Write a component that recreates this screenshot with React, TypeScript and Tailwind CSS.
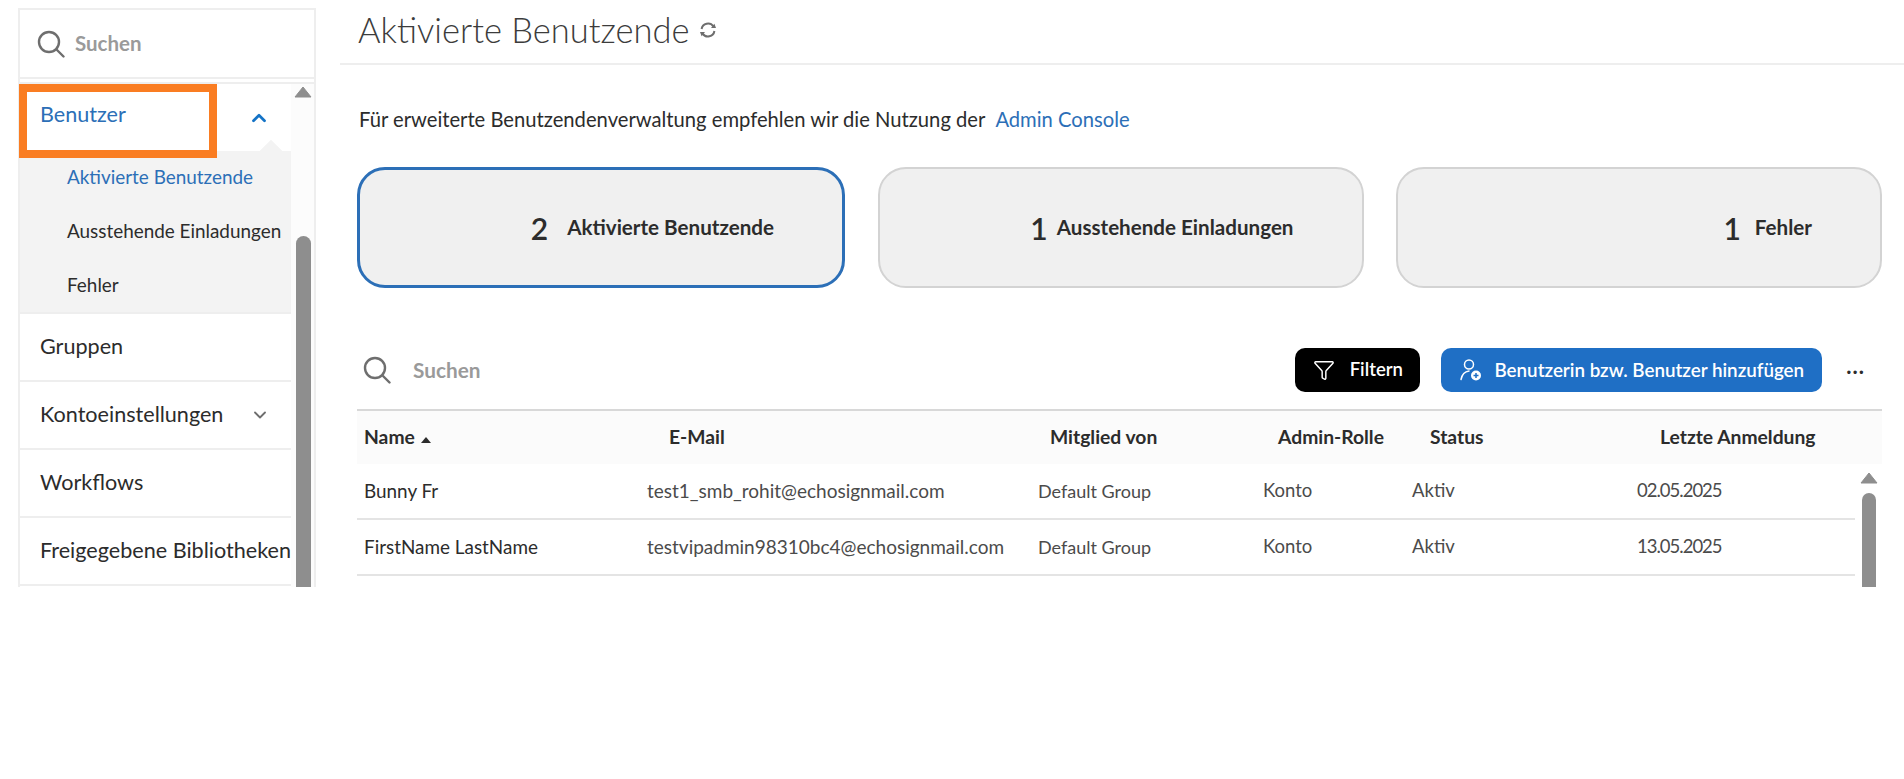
import { ChevronDown, ChevronUp, Funnel } from 'lucide-react';

const font = { fontFamily: 'Lato, "Noto Sans", sans-serif' };

function SearchIcon({ className }: { className?: string }) {
  return (
    <svg viewBox="0 0 28 28" fill="none" stroke="currentColor" strokeWidth="2.4" strokeLinecap="round" className={className}>
      <circle cx="12" cy="12" r="10" />
      <path d="M19.5 19.5 L26.5 26.5" />
    </svg>
  );
}

function RefreshIcon() {
  return (
    <svg viewBox="0 0 20 20" fill="none" stroke="#6e6e6e" strokeWidth="2" className="w-[20px] h-[20px]">
      <path d="M3.6 9 A6.5 6.5 0 0 1 15.4 6.4" />
      <path d="M16.4 11 A6.5 6.5 0 0 1 4.6 13.6" />
      <path d="M13 8 L18 8 L16.4 3.8 Z" fill="#6e6e6e" stroke="none" />
      <path d="M7 12 L2 12 L3.6 16.2 Z" fill="#6e6e6e" stroke="none" />
    </svg>
  );
}

function UserAddIcon() {
  return (
    <svg viewBox="0 0 24 24" fill="none" stroke="#fff" strokeWidth="1.5" className="w-[24px] h-[24px]">
      <circle cx="10" cy="6.5" r="4.5" />
      <path d="M2 21.5 C3 16.5 6 13.5 10 13" strokeLinecap="round" />
      <circle cx="17" cy="17.5" r="5" fill="#fff" stroke="none" />
      <path d="M17 15 V20 M14.5 17.5 H19.5" stroke="#1f6fc5" strokeWidth="1.5" />
    </svg>
  );
}

function ArrowUp({ className }: { className?: string }) {
  return (
    <svg viewBox="0 0 18 12" className={className}>
      <path d="M9 1 L17 11 H1 Z" fill="#8e8e8e" stroke="#8e8e8e" strokeLinejoin="round" />
    </svg>
  );
}

function NavRow({ label, chevron }: { label: string; chevron?: boolean }) {
  return (
    <div className="h-[68px] shrink-0 flex items-center justify-between pl-[20px] pr-[21px] border-b-2 border-[#eeeeee] text-[21.6px] text-[#2c2c2c] whitespace-nowrap">
      <span className="pb-[2px]">{label}</span>
      {chevron && <ChevronDown className="w-[20px] h-[20px] text-[#6e6e6e]" strokeWidth={2.2} />}
    </div>
  );
}

function StatCard({ count, label, active, gap }: { count: string; label: string; active?: boolean; gap: string }) {
  return (
    <div
      className={`h-[121px] flex items-center justify-end pr-[68px] bg-[#f0f0f0] rounded-[28px] ${
        active ? 'w-[488px] border-[3px] border-[#2c6fb7]' : 'w-[486px] border-2 border-[#d3d3d3]'
      } ${gap}`}
    >
      <span className="text-[30px] font-semibold text-[#2c2c2c] leading-none">{count}</span>
      <span className="text-[20.6px] font-bold text-[#2c2c2c]">{label}</span>
    </div>
  );
}

const headerGrid = 'grid grid-cols-[305px_381px_228px_152px_230px_1fr]';
const rowGrid = 'grid grid-cols-[283px_391px_225px_149px_225px_1fr]';

const users = [
  { name: 'Bunny Fr', email: 'test1_smb_rohit@echosignmail.com', date: '02.05.2025' },
  { name: 'FirstName LastName', email: 'testvipadmin98310bc4@echosignmail.com', date: '13.05.2025' },
];

export default function App() {
  return (
    <div className="w-[1904px] h-[779px] bg-white overflow-hidden" style={font}>
      <div className="flex h-[587px] overflow-hidden">
        {/* Sidebar */}
        <aside className="relative ml-[18px] mt-[8px] w-[298px] shrink-0 border-x-2 border-t-2 border-[#eeeeee] flex flex-col">
          <div className="h-[69px] shrink-0 flex items-center gap-[10px] pl-[17px] border-b-2 border-[#eeeeee] text-[20.5px] font-bold text-[#9a9a9a]">
            <SearchIcon className="w-[28px] h-[28px] text-[#6e6e6e]" />
            Suchen
          </div>
          <div className="flex flex-1 min-h-0 mt-[3px] border-t-2 border-[#eeeeee]">
            <div className="w-[271px] shrink-0">
              <div className="h-[67px] flex items-center justify-between pl-[20px] pr-[21px] text-[21.6px] text-[#2c6fb7] bg-white">
                <span className="pb-[6px]">Benutzer</span>
                <ChevronUp className="w-[22px] h-[22px] text-[#1473c6]" strokeWidth={3} />
              </div>
              <div className="relative h-[163px] bg-[#f3f3f3] border-b-2 border-[#eeeeee] flex flex-col justify-between pt-[12px] pb-[13px] pl-[47px] text-[18.9px] text-[#2c2c2c] whitespace-nowrap">
                <span className="absolute right-[12px] top-[-8px] w-[16px] h-[16px] rotate-45 bg-[#f3f3f3]" />
                <span className="text-[#2c6fb7]">Aktivierte Benutzende</span>
                <span>Ausstehende Einladungen</span>
                <span>Fehler</span>
              </div>
              <NavRow label="Gruppen" />
              <NavRow label="Kontoeinstellungen" chevron />
              <NavRow label="Workflows" />
              <NavRow label="Freigegebene Bibliotheken" />
            </div>
            <div className="flex-1 flex flex-col items-center bg-[#fcfcfc] pt-[2px] pl-[1px]">
              <ArrowUp className="w-[18px] h-[12px] shrink-0" />
              <div className="mt-[138px] w-[15px] flex-1 bg-[#8e8e8e] rounded-t-[8px]" />
            </div>
          </div>
          {/* orange callout */}
          <div className="absolute left-[-1px] top-[74px] w-[198px] h-[74px] border-[8px] border-[#fa7d22]" />
        </aside>

        {/* Main */}
        <main className="ml-[24px] flex-1 min-w-0 flex flex-col">
          <div className="h-[65px] shrink-0 flex items-center gap-[8px] pl-[18px] pb-[3px] border-b-2 border-[#eeeeee]">
            <h1 className="text-[34.5px] font-light text-[#3c3c3c]">Aktivierte Benutzende</h1>
            <RefreshIcon />
          </div>
          <div className="pl-[17px] pr-[22px] flex-1 flex flex-col min-h-0">
            <p className="mt-[41px] pl-[2px] text-[20.2px] text-[#2c2c2c] leading-[26px]">
              Für erweiterte Benutzendenverwaltung empfehlen wir die Nutzung der
              <a className="ml-[10px] text-[#2c6fb7]">Admin Console</a>
            </p>
            <div className="mt-[35px] flex items-center justify-between">
              <StatCard count="2" label="Aktivierte Benutzende" active gap="gap-[19px]" />
              <StatCard count="1" label="Ausstehende Einladungen" gap="gap-[9px]" />
              <StatCard count="1" label="Fehler" gap="gap-[14px]" />
            </div>

            {/* Toolbar */}
            <div className="mt-[60px] h-[44px] shrink-0 flex items-center">
              <SearchIcon className="ml-[6px] w-[28px] h-[28px] text-[#6e6e6e]" />
              <span className="ml-[22px] text-[20.8px] font-bold text-[#9a9a9a]">Suchen</span>
              <button className="ml-auto w-[125px] h-[44px] rounded-[10px] bg-black text-white text-[18.5px] font-semibold flex items-center justify-center gap-[15px]">
                <Funnel className="w-[22px] h-[22px]" strokeWidth={1.6} />
                Filtern
              </button>
              <button className="ml-[21px] w-[381px] h-[44px] rounded-[10px] bg-[#1f6fc5] text-white text-[18.8px] font-semibold flex items-center justify-center gap-[11px]">
                <UserAddIcon />
                Benutzerin bzw. Benutzer hinzufügen
              </button>
              <span className="ml-[24px] mr-[17px] text-[22px] leading-none font-bold text-[#2c2c2c] tracking-[1px] pb-[8px]">...</span>
            </div>

            {/* Table */}
            <div className={`${headerGrid} mt-[17px] h-[55px] shrink-0 items-center pl-[7px] bg-[#fbfbfb] border-t-2 border-[#d8d8d8] text-[19.3px] font-bold text-[#2c2c2c]`}>
              <span className="flex items-center gap-[6px]">
                Name
                <span className="w-0 h-0 mt-[4px] border-x-[5px] border-x-transparent border-b-[6px] border-b-[#2c2c2c]" />
              </span>
              <span>E-Mail</span>
              <span>Mitglied von</span>
              <span>Admin-Rolle</span>
              <span>Status</span>
              <span>Letzte Anmeldung</span>
            </div>
            <div className="flex flex-1 min-h-0">
              <div className="w-[1498px] shrink-0">
                {users.map((u) => (
                  <div key={u.email} className={`${rowGrid} h-[56px] items-center pl-[7px] border-b-2 border-[#e4e4e4] text-[18.5px] text-[#4b4b4b]`}>
                    <span className="text-[#2c2c2c] text-[18.9px]">{u.name}</span>
                    <span className="text-[19px]">{u.email}</span>
                    <span className="text-[18px]">Default Group</span>
                    <span>Konto</span>
                    <span>Aktiv</span>
                    <span className="tracking-[-1px]">{u.date}</span>
                  </div>
                ))}
              </div>
              <div className="flex-1 flex flex-col items-center pt-[8px]">
                <ArrowUp className="w-[18px] h-[12px] shrink-0" />
                <div className="mt-[9px] w-[14px] flex-1 bg-[#8e8e8e] rounded-t-[8px]" />
              </div>
            </div>
          </div>
        </main>
      </div>
    </div>
  );
}
